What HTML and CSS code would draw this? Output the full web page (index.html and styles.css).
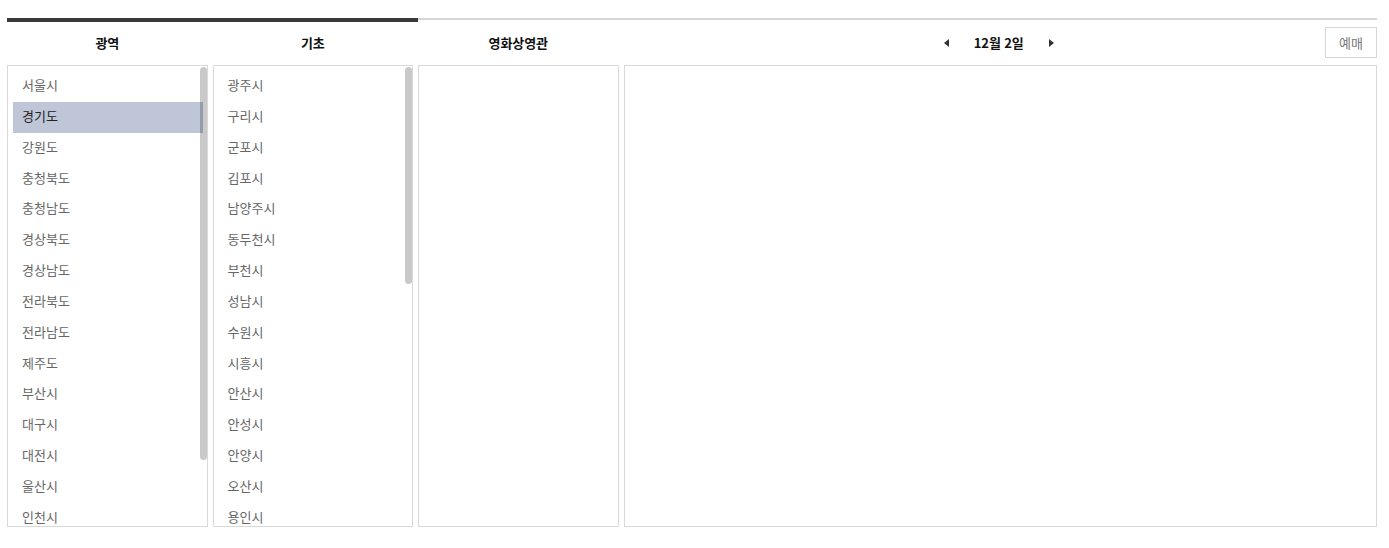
FILE: index.html
```html
<!DOCTYPE html>
<html lang="ko">
<head>
<meta charset="utf-8">
<title>예매</title>
<link rel="stylesheet" href="styles.css">
</head>
<body>
<div class="wrap">
  <div class="tabbar"><div class="tab-active"></div></div>
  <div class="head">
    <div class="hcol col-15"><span class="htitle">광역</span></div>
    <div class="hcol col-15"><span class="htitle">기초</span></div>
    <div class="hcol col-15"><span class="htitle">영화상영관</span></div>
    <div class="hcol col-55 hdate">
      <div class="spacer"></div>
      <div class="datenav">
        <span class="arrow arrow-left"></span>
        <span class="htitle">12월 2일</span>
        <span class="arrow arrow-right"></span>
      </div>
      <div class="btnwrap"><button class="btn">예매</button></div>
    </div>
  </div>
  <div class="panels">
    <div class="panel col-15">
      <ul class="list">
        <li>서울시</li>
        <li class="on">경기도</li>
        <li>강원도</li>
        <li>충청북도</li>
        <li>충청남도</li>
        <li>경상북도</li>
        <li>경상남도</li>
        <li>전라북도</li>
        <li>전라남도</li>
        <li>제주도</li>
        <li>부산시</li>
        <li>대구시</li>
        <li>대전시</li>
        <li>울산시</li>
        <li>인천시</li>
      </ul>
      <div class="thumb thumb-1"></div>
    </div>
    <div class="panel col-15">
      <ul class="list">
        <li>광주시</li>
        <li>구리시</li>
        <li>군포시</li>
        <li>김포시</li>
        <li>남양주시</li>
        <li>동두천시</li>
        <li>부천시</li>
        <li>성남시</li>
        <li>수원시</li>
        <li>시흥시</li>
        <li>안산시</li>
        <li>안성시</li>
        <li>안양시</li>
        <li>오산시</li>
        <li>용인시</li>
      </ul>
      <div class="thumb thumb-2"></div>
    </div>
    <div class="panel col-15"></div>
    <div class="panel col-55 last"></div>
  </div>
</div>
</body>
</html>
```

FILE: styles.css
```css
html, body {
  margin: 0;
  padding: 0;
  background: #fff;
}
body {
  font-family: "Noto Sans CJK KR", "Noto Sans", sans-serif;
  font-size: 13px;
  color: #333;
}
.wrap {
  width: 1370px;
  margin: 0 0 0 7px;
  padding-top: 18px;
}
.tabbar {
  height: 4px;
  display: flex;
  align-items: flex-start;
  background: linear-gradient(#d6d6d6, #d6d6d6) no-repeat 0 0 / 100% 2px;
}
.tab-active {
  width: 30%;
  height: 4px;
  background: #3a3a3a;
}
.head {
  display: flex;
  height: 43px;
}
.hcol {
  display: flex;
  align-items: center;
  justify-content: center;
  box-sizing: border-box;
  padding-bottom: 2px;
}
.hcol.col-15 {
  width: calc(15% - 5px);
  margin-right: 5px;
}
.col-55 { width: 55%; }
.htitle {
  font-weight: bold;
  font-size: 13px;
  color: #111;
  letter-spacing: -0.1px;
}
.hdate {
  display: grid;
  grid-template-columns: 1fr auto 1fr;
  align-items: center;
}
.datenav {
  display: flex;
  align-items: center;
  gap: 25px;
  margin-left: -3px;
}
.arrow {
  width: 0;
  height: 0;
  border-top: 4.5px solid transparent;
  border-bottom: 4.5px solid transparent;
}
.arrow-left { border-right: 5px solid #333; }
.arrow-right { border-left: 5px solid #333; }
.btnwrap {
  display: flex;
  justify-content: flex-end;
}
.btn {
  width: 52px;
  height: 31px;
  box-sizing: border-box;
  border: 1px solid #d6d6d6;
  background: #fff;
  color: #777;
  font-family: inherit;
  font-size: 13px;
  padding: 0 0 1px;
}
.panels {
  display: flex;
}
.panel {
  position: relative;
  height: 462px;
  box-sizing: border-box;
  border: 1px solid #d9d9d9;
  margin-right: 5px;
  overflow: hidden;
}
.panel.col-15 { width: calc(15% - 5px); }
.panel.last { margin-right: 0; }
.list {
  list-style: none;
  margin: 0;
  padding: 5px 4px 5px 5px;
  height: 100%;
  box-sizing: border-box;
  overflow: hidden;
}
.list li {
  height: 30.85px;
  box-sizing: border-box;
  line-height: 28.85px;
  padding: 0 9px 2px;
  color: #666;
  font-size: 13px;
  white-space: nowrap;
}
.list li.on {
  background: #bec6d7;
  color: #222;
}
.thumb {
  position: absolute;
  right: 0;
  top: 1px;
  width: 7px;
  border-radius: 4px;
  background: rgba(0, 0, 0, 0.21);
}
.thumb-1 { height: 393px; }
.thumb-2 { height: 217px; }
```
